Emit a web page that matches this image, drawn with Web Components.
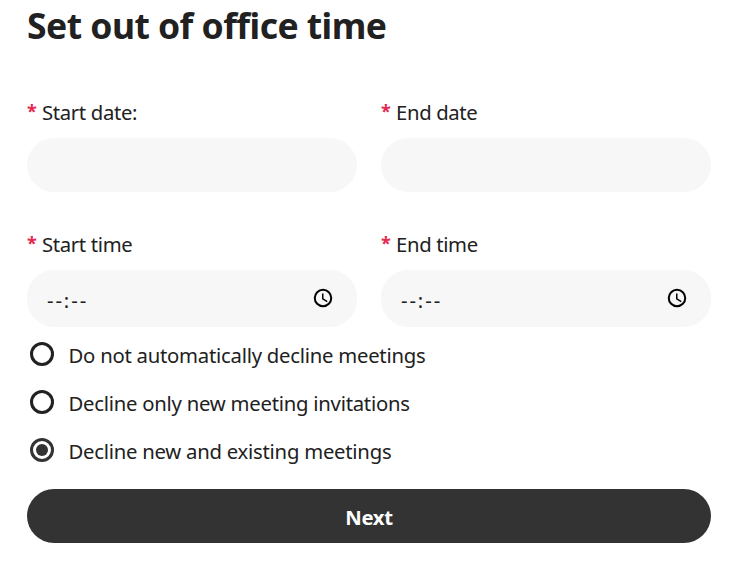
<!DOCTYPE html>
<html lang="en">
<head>
<meta charset="utf-8">
<title>Set out of office time</title>
<style>
  body { margin: 0; background: #fff; }
</style>
</head>
<body>
<office-form heading="Set out of office time">
  <form-field label="Start date:"></form-field>
  <form-field label="End date"></form-field>
  <form-field label="Start time" type="time"></form-field>
  <form-field label="End time" type="time"></form-field>
  <radio-option slot="options">Do not automatically decline meetings</radio-option>
  <radio-option slot="options">Decline only new meeting invitations</radio-option>
  <radio-option slot="options" checked>Decline new and existing meetings</radio-option>
  <pill-button slot="action">Next</pill-button>
</office-form>

<script>
class OfficeForm extends HTMLElement {
  connectedCallback() {
    this.attachShadow({ mode: 'open' }).innerHTML = `
      <style>
        :host {
          display: block; box-sizing: border-box; width: 731px; height: 561px;
          padding: 0 20px 0 27px; overflow: hidden; color: #212121;
          font: 20.3px/24px "Noto Sans", "Open Sans", sans-serif; letter-spacing: -0.24px;
        }
        h1 { margin: 0 0 50px; font-size: 35.5px; line-height: 50px; font-weight: 700; letter-spacing: -0.54px; }
        .fields { display: grid; grid-template-columns: 330px 330px; gap: 40px 24px; }
        .options { display: flex; flex-direction: column; padding: 4px 0 14px; }
      </style>
      <h1></h1>
      <div class="fields"><slot></slot></div>
      <div class="options"><slot name="options"></slot></div>
      <slot name="action"></slot>`;
    this.shadowRoot.querySelector('h1').textContent = this.getAttribute('heading');
  }
}

class FormField extends HTMLElement {
  connectedCallback() {
    const time = this.getAttribute('type') === 'time';
    this.attachShadow({ mode: 'open' }).innerHTML = `
      <style>
        :host { display: flex; flex-direction: column; gap: 14px; letter-spacing: -0.34px; }
        .label { display: flex; height: 24px; }
        .star { width: 15px; color: #e6294f; font-weight: 700; font-size: 18px; line-height: 22px; }
        .box {
          box-sizing: border-box; height: 54px; border-radius: 27px; background: #f7f7f7;
          display: flex; align-items: center; justify-content: space-between; padding: 0 23px 0 20px;
        }
        .box.time { height: 57px; }
        .value { letter-spacing: 1.9px; padding-top: 2px; }
        svg { display: block; width: 22px; height: 22px; margin-bottom: 1px; }
      </style>
      <div class="label"><span class="star">*</span><span class="text"></span></div>
      <div class="box ${time ? 'time' : ''}">${time ? `
        <span class="value">--:--</span>
        <svg viewBox="0 0 24 24"><circle cx="12" cy="12" r="9" fill="none" stroke="#000" stroke-width="2.2"/><path d="M11.75 7v6l4.9 2.9" fill="none" stroke="#000" stroke-width="1.6"/></svg>` : ''}
      </div>`;
    this.shadowRoot.querySelector('.text').textContent = this.getAttribute('label');
  }
}

class RadioOption extends HTMLElement {
  connectedCallback() {
    this.attachShadow({ mode: 'open' }).innerHTML = `
      <style>
        :host { display: flex; align-items: center; height: 48px; padding-left: 3px; gap: 14.5px; white-space: nowrap; }
        .ring {
          box-sizing: border-box; width: 24px; height: 24px; margin-bottom: 2px; border: 3px solid #212121;
          border-radius: 50%; display: grid; place-items: center;
        }
        :host([checked]) .ring { border-color: #333; }
        :host([checked]) .ring::after { content: ""; width: 12px; height: 12px; border-radius: 50%; background: #333; }
      </style>
      <span class="ring"></span><span><slot></slot></span>`;
  }
}

class PillButton extends HTMLElement {
  connectedCallback() {
    this.attachShadow({ mode: 'open' }).innerHTML = `
      <style>
        :host { display: block; }
        button {
          display: block; width: 100%; height: 54px; border: 0; border-radius: 27px; padding: 2px 0 0;
          background: #333; color: #fff; font: inherit; font-weight: 700; letter-spacing: -0.3px;
        }
      </style>
      <button type="button"><slot></slot></button>`;
  }
}

customElements.define('office-form', OfficeForm);
customElements.define('form-field', FormField);
customElements.define('radio-option', RadioOption);
customElements.define('pill-button', PillButton);
</script>
</body>
</html>
